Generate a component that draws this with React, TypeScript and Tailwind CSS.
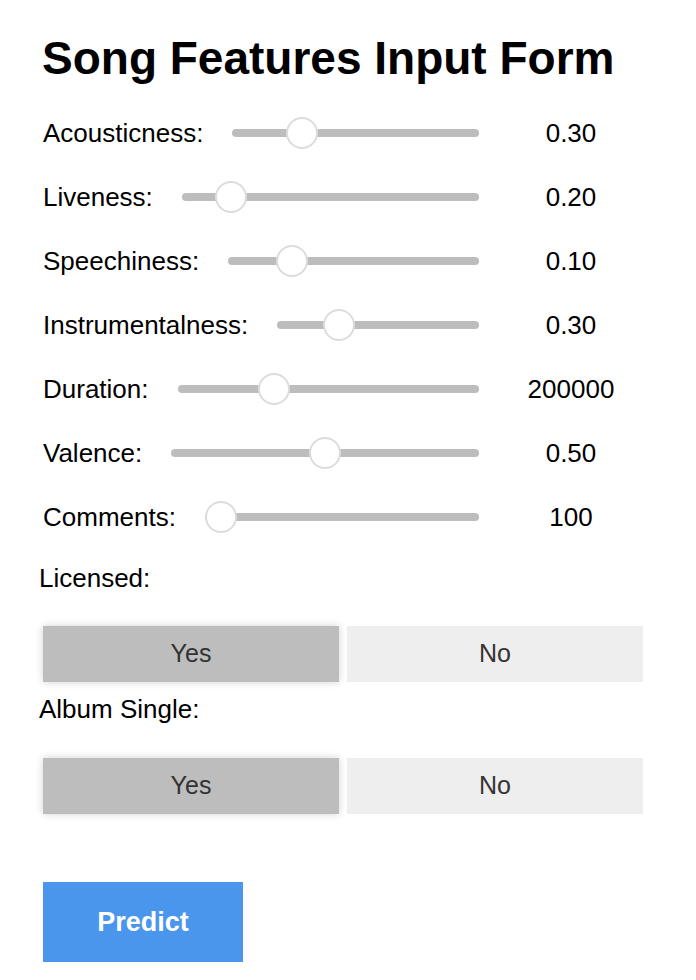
import { useState } from "react";

type Feature = {
  label: string;
  value: string;
  // thumb position between min and max, 0..1
  pos: number;
};

const features: Feature[] = [
  { label: "Acousticness:", value: "0.30", pos: 0.249 },
  { label: "Liveness:", value: "0.20", pos: 0.124 },
  { label: "Speechiness:", value: "0.10", pos: 0.218 },
  { label: "Instrumentalness:", value: "0.30", pos: 0.27 },
  { label: "Duration:", value: "200000", pos: 0.3 },
  { label: "Valence:", value: "0.50", pos: 0.498 },
  { label: "Comments:", value: "100", pos: 0 },
];

const font = "font-['Liberation_Sans',Arial,Helvetica,sans-serif]";

export default function App() {
  const [licensed, setLicensed] = useState(true);
  const [single, setSingle] = useState(true);

  return (
    <div className={`${font} min-h-[980px] w-[696px] bg-white pl-[43px] pt-[32px] text-black`}>
      <h1 className="-ml-[1px] text-[46px] font-bold leading-[52px]">
        Song Features Input Form
      </h1>

      <div className="mt-[17px] w-[620px]">
        {features.map((feature) => (
          <SliderRow key={feature.label} feature={feature} />
        ))}
      </div>

      <p className="-ml-[4px] mt-[14px] text-[26px] leading-[30px]">Licensed:</p>
      <Toggle value={licensed} onChange={setLicensed} className="mt-[33px]" />

      <p className="-ml-[4px] mt-[12px] text-[26px] leading-[30px]">Album Single:</p>
      <Toggle value={single} onChange={setSingle} className="mt-[34px]" />

      <button
        type="button"
        className="mt-[68px] flex h-[80px] w-[200px] items-center justify-center bg-[#4a96ec] text-[27px] font-bold text-white"
      >
        Predict
      </button>
    </div>
  );
}

function SliderRow({ feature }: { feature: Feature }) {
  return (
    <div className="flex h-[64px] items-center">
      <span className="whitespace-nowrap text-[26px] leading-[30px]">{feature.label}</span>
      <div className="relative ml-[29px] h-[32px] flex-1">
        <div className="absolute left-0 right-0 top-[12px] h-[8px] rounded-full bg-[#bdbdbd]" />
        <div
          className="absolute top-0 h-[32px] w-[32px] rounded-full border-2 border-[#dcdcdc] bg-white"
          style={{ left: `calc(${feature.pos} * (100% - 32px))` }}
        />
      </div>
      <span className="w-[184px] text-center text-[26px] leading-[30px]">{feature.value}</span>
    </div>
  );
}

function Toggle({
  value,
  onChange,
  className,
}: {
  value: boolean;
  onChange: (value: boolean) => void;
  className?: string;
}) {
  const on = "bg-[#bdbdbd] shadow-[0_0_8px_rgba(0,0,0,0.18)] z-10";
  const off = "bg-[#eeeeee]";
  return (
    <div className={`flex w-[600px] gap-[8px] ${className ?? ""}`}>
      <button
        type="button"
        onClick={() => onChange(true)}
        className={`relative h-[56px] flex-1 text-[25px] text-[#333] ${value ? on : off}`}
      >
        Yes
      </button>
      <button
        type="button"
        onClick={() => onChange(false)}
        className={`relative h-[56px] flex-1 text-[25px] text-[#333] ${value ? off : on}`}
      >
        No
      </button>
    </div>
  );
}
